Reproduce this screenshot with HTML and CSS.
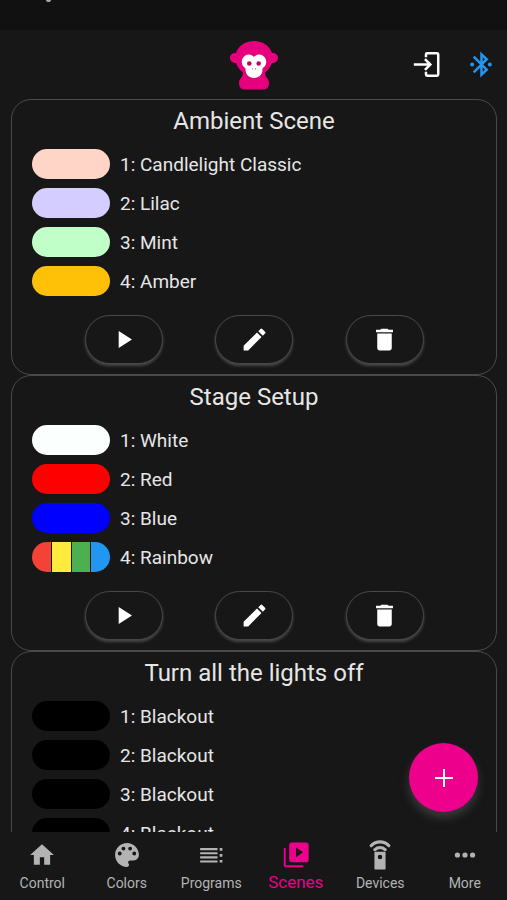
FILE: index.html
```
<!DOCTYPE html>
<html lang="en">
<head>
<meta charset="utf-8">
<meta name="viewport" content="width=device-width, initial-scale=1">
<title>Scenes</title>
<link rel="stylesheet" href="styles.css">
</head>
<body>
<svg class="defs" aria-hidden="true">
  <symbol id="play" viewBox="0 0 24 24"><path d="M8 5v14l11-7z"/></symbol>
  <symbol id="edit" viewBox="0 0 24 24"><path d="M3 17.250V21h3.750L17.810 9.940l-3.750-3.750L3 17.250zM20.710 7.040a1 1 0 0 0 0-1.410l-2.340-2.340a1 1 0 0 0-1.410 0l-1.830 1.830 3.750 3.750 1.830-1.830z"/></symbol>
  <symbol id="trash" viewBox="0 0 24 24"><path d="M6 19c0 1.100.9 2 2 2h8c1.100 0 2-.9 2-2V7H6v12zM19 4h-3.500l-1-1h-5l-1 1H5v2h14V4z"/></symbol>
</svg>
<div class="status"><i class="status-mark"></i></div>
<header class="topbar">
  <svg class="logo" viewBox="0 0 50 50" role="img" aria-label="Monkey logo">
    <path fill="#e6007e" d="M25 1C16 1 9 6 7 13 3 12.500 1 15 1 18c0 3 2.500 5 6 5 1.500 4 4 7.500 7 9.500-.2 2-.6 4-2 5.500-1.500 1.500-2 3-2 5 0 4 2 6.500 6 6.500h18c4 0 6-2.500 6-6.500 0-2-.5-3.500-2-5-1.400-1.500-1.800-3.500-2-5.500 3-2 5.500-5.500 7-9.500 3.500 0 6-2 6-5 0-3-2-5.500-6-5C41 6 34 1 25 1z"/>
    <path fill="#fff" d="M25 17c-2-2.700-6-3.400-9-1.300-3.200 2.200-4.200 6.600-2.300 9.800.8 1.300 1.900 2.100 2.800 2.700-.4 5.800 3 9.800 8.500 9.800s8.900-4 8.500-9.800c.9-.6 2-1.400 2.800-2.700 1.900-3.200.9-7.600-2.300-9.800-3-2.100-7-1.400-9 1.300z"/>
    <circle cx="20.300" cy="23.500" r="2.300" fill="#c2006c"/><circle cx="29.700" cy="23.500" r="2.300" fill="#c2006c"/>
    <circle cx="23.500" cy="28.800" r=".6" fill="#d58"/><circle cx="26.500" cy="28.800" r=".6" fill="#d58"/>
  </svg>
  <div class="top-actions">
    <button aria-label="Log in"><svg class="line" viewBox="0 0 26 26" stroke="#fff" stroke-width="2.400"><path d="M12.500 6V3.300Q12.500 2.200 13.600 2.200H23.200Q24.300 2.200 24.300 3.300V22.700Q24.300 23.800 23.200 23.800H13.600Q12.500 23.800 12.500 22.700V20M.8 13H16M11.500 7.800L16.700 13 11.500 18.200"/></svg></button>
    <button aria-label="Bluetooth"><svg class="line" viewBox="0 0 26 26" stroke="#2196f3" stroke-width="2.400"><path d="M5.500 5.500L18 18 13 22.800V3.200L18 8 5.500 20.500"/><circle cx="4" cy="13" r="1.900" fill="#2196f3" stroke="none"/><circle cx="21" cy="13" r="1.900" fill="#2196f3" stroke="none"/></svg></button>
  </div>
</header>
<main class="scenes">
  <section class="card">
    <h2>Ambient Scene</h2>
    <ul>
      <li><span class="swatch candle"></span><span class="label">1: Candlelight Classic</span></li>
      <li><span class="swatch lilac"></span><span class="label">2: Lilac</span></li>
      <li><span class="swatch mint"></span><span class="label">3: Mint</span></li>
      <li><span class="swatch amber"></span><span class="label">4: Amber</span></li>
    </ul>
    <div class="actions">
      <button aria-label="Play"><svg><use href="#play"/></svg></button>
      <button aria-label="Edit"><svg><use href="#edit"/></svg></button>
      <button aria-label="Delete"><svg><use href="#trash"/></svg></button>
    </div>
  </section>
  <section class="card">
    <h2>Stage Setup</h2>
    <ul>
      <li><span class="swatch white"></span><span class="label">1: White</span></li>
      <li><span class="swatch red"></span><span class="label">2: Red</span></li>
      <li><span class="swatch blue"></span><span class="label">3: Blue</span></li>
      <li><span class="swatch rainbow"><i></i><i></i><i></i><i></i></span><span class="label">4: Rainbow</span></li>
    </ul>
    <div class="actions">
      <button aria-label="Play"><svg><use href="#play"/></svg></button>
      <button aria-label="Edit"><svg><use href="#edit"/></svg></button>
      <button aria-label="Delete"><svg><use href="#trash"/></svg></button>
    </div>
  </section>
  <section class="card">
    <h2>Turn all the lights off</h2>
    <ul>
      <li><span class="swatch black"></span><span class="label">1: Blackout</span></li>
      <li><span class="swatch black"></span><span class="label">2: Blackout</span></li>
      <li><span class="swatch black"></span><span class="label">3: Blackout</span></li>
      <li><span class="swatch black"></span><span class="label">4: Blackout</span></li>
    </ul>
    <div class="actions">
      <button aria-label="Play"><svg><use href="#play"/></svg></button>
      <button aria-label="Edit"><svg><use href="#edit"/></svg></button>
      <button aria-label="Delete"><svg><use href="#trash"/></svg></button>
    </div>
  </section>
</main>
<div class="dock">
  <button class="fab" aria-label="Add scene"><svg viewBox="0 0 18 18" stroke="#fff" stroke-width="2"><path d="M9 0v18M0 9h18"/></svg></button>
  <nav>
    <a href="#control"><svg viewBox="0 0 24 24"><path d="M10 21v-7h4v7h5.500v-9H23L12 2 1 12h3.500v9z"/></svg>Control</a>
    <a href="#colors"><svg viewBox="0 0 24 24"><path d="M12 1C6 1 1 6 1 12s5 11 11 11c1.100 0 1.900-.9 1.900-1.900 0-.5-.2-.9-.5-1.200-.3-.3-.4-.7-.4-1.100 0-1 .8-1.800 1.800-1.800H18c2.800 0 5-2.200 5-5C23 5.900 18 1 12 1zM5.300 12.400a1.800 1.800 0 1 1 0-3.600 1.800 1.800 0 0 1 0 3.600zm3.400-4.500a1.800 1.800 0 1 1 0-3.600 1.800 1.800 0 0 1 0 3.600zm6.200 0a1.800 1.800 0 1 1 0-3.600 1.800 1.800 0 0 1 0 3.600zm3.800 4.500a1.800 1.800 0 1 1 0-3.600 1.800 1.800 0 0 1 0 3.600z"/></svg>Colors</a>
    <a href="#programs"><svg viewBox="0 0 24 24"><path d="M2 5.600h16v2H2zM2 9.400h16v2H2zM2 13.200h16v2H2zM2 17h16v2H2zM20 5.600h2.500v2.400H20zM20 11.100h2.500v2.400H20zM20 16.600h2.500v2.400H20z"/></svg>Programs</a>
    <a href="#scenes" class="active" aria-current="page"><svg viewBox="0 0 24 24"><path d="M2.500 5.500H.7v16c0 1.100.9 1.900 2 1.900h16v-1.900H2.500V5.500zM21.500.5H8C6.700.5 5.700 1.400 5.700 2.600v14C5.700 17.800 6.700 18.700 8 18.700h13.500c1.200 0 2.200-.9 2.200-2.100v-14c0-1.200-1-2.100-2.200-2.100zM12 14V5l6.500 4.500L12 14z"/></svg>Scenes</a>
    <a href="#devices"><svg class="tall" viewBox="0 0 24 28"><path d="M16.300 11H7.700c-.5 0-.9.4-.9.900v14.800c0 .5.4.9.900.9h8.600c.5 0 .9-.4.900-.9V11.900c0-.5-.4-.9-.9-.9zM12 18a2.100 2.100 0 1 1 0-4.200 2.100 2.100 0 0 1 0 4.200z"/><path class="waves" d="M7.200 9C10 6.500 14 6.500 16.800 9M3.800 5.200C8.500.6 15.500.6 20.200 5.200"/></svg>Devices</a>
    <a href="#more"><svg viewBox="0 0 24 24"><circle cx="5" cy="12" r="2.400"/><circle cx="12" cy="12" r="2.400"/><circle cx="19" cy="12" r="2.400"/></svg>More</a>
  </nav>
</div>
</body>
</html>
```
FILE: styles.css
```
* { box-sizing: border-box; }
body {
  margin: 0;
  height: 100vh;
  display: flex;
  flex-direction: column;
  overflow: hidden;
  background: #171717;
  color: #e6e6e6;
  font-family: Roboto, "Liberation Sans", sans-serif;
}
button { padding: 0; border: 0; background: none; color: #fff; cursor: pointer; }
svg { display: block; fill: currentColor; }
.defs { display: none; }
.line { fill: none; }
.status { flex: none; height: 30px; padding-left: 46px; background: #111; }
.status-mark { display: block; width: 5px; height: 2px; border-radius: 0 0 3px 3px; background: #aaa; }
.topbar {
  flex: none;
  height: 69px;
  padding: 0 12px;
  display: grid;
  grid-template-columns: 1fr 50px 1fr;
  align-items: center;
}
.logo { grid-column: 2; width: 50px; height: 50px; }
.top-actions { display: flex; justify-content: flex-end; gap: 28px; }
.top-actions svg { width: 27px; height: 27px; }
.scenes { flex: 1; min-height: 0; overflow: hidden; padding: 0 10px 0 11px; }
.card { padding-bottom: 10px; border: 1px solid #4a4a4a; border-radius: 20px; }
h2 { margin: 0 0 2px; font-size: 24px; line-height: 42px; font-weight: 400; text-align: center; }
ul { margin: 0; padding: 0 20px; list-style: none; }
li { display: flex; align-items: center; gap: 10px; height: 39px; font-size: 19px; }
.label { padding-top: 2px; }
.swatch { flex: none; display: flex; width: 78px; height: 30px; border-radius: 15px; overflow: hidden; }
.candle { background: #ffd5c8; }
.lilac { background: #d3ceff; }
.mint { background: #c1ffc8; }
.amber { background: #ffc107; }
.white { background: #fbfffe; }
.red { background: #f00; }
.blue { background: #00f; }
.black { background: #000; }
.rainbow { gap: 1px; }
.rainbow i { flex: 1; background: #f44336; }
.rainbow i:nth-child(2) { background: #ffeb3b; }
.rainbow i:nth-child(3) { background: #4caf50; }
.rainbow i:nth-child(4) { background: #2196f3; }
.actions { display: flex; justify-content: space-evenly; padding: 0 20px; margin-top: 15px; }
.actions button {
  display: grid;
  place-items: center;
  width: 78px;
  height: 49px;
  border: 1px solid #484848;
  border-radius: 25px;
  background: #171717;
  box-shadow: 0 2px 3px #484848;
}
.actions svg { width: 29px; height: 29px; }
.dock { flex: none; position: relative; }
.fab {
  position: absolute;
  right: 29px;
  bottom: calc(100% + 20px);
  display: grid;
  place-items: center;
  width: 69px;
  height: 69px;
  border-radius: 50%;
  background: #ec008c;
  box-shadow: 0 6px 10px #3a3a3a;
}
.fab svg { width: 18px; height: 18px; }
nav { position: relative; display: grid; grid-template-columns: repeat(6, 1fr); height: 68px; background: #171717; }
nav a {
  display: flex;
  flex-direction: column;
  align-items: center;
  gap: 4px;
  padding-top: 10px;
  color: #b3b3b3;
  font-size: 14px;
  line-height: 22px;
  text-decoration: none;
}
nav svg { width: 26px; height: 26px; }
nav .tall { height: 30px; margin: -2px 0; }
.waves { fill: none; stroke: currentColor; stroke-width: 3; stroke-linecap: round; }
nav .active { color: #ec008c; font-size: 17px; line-height: 20px; }
```
